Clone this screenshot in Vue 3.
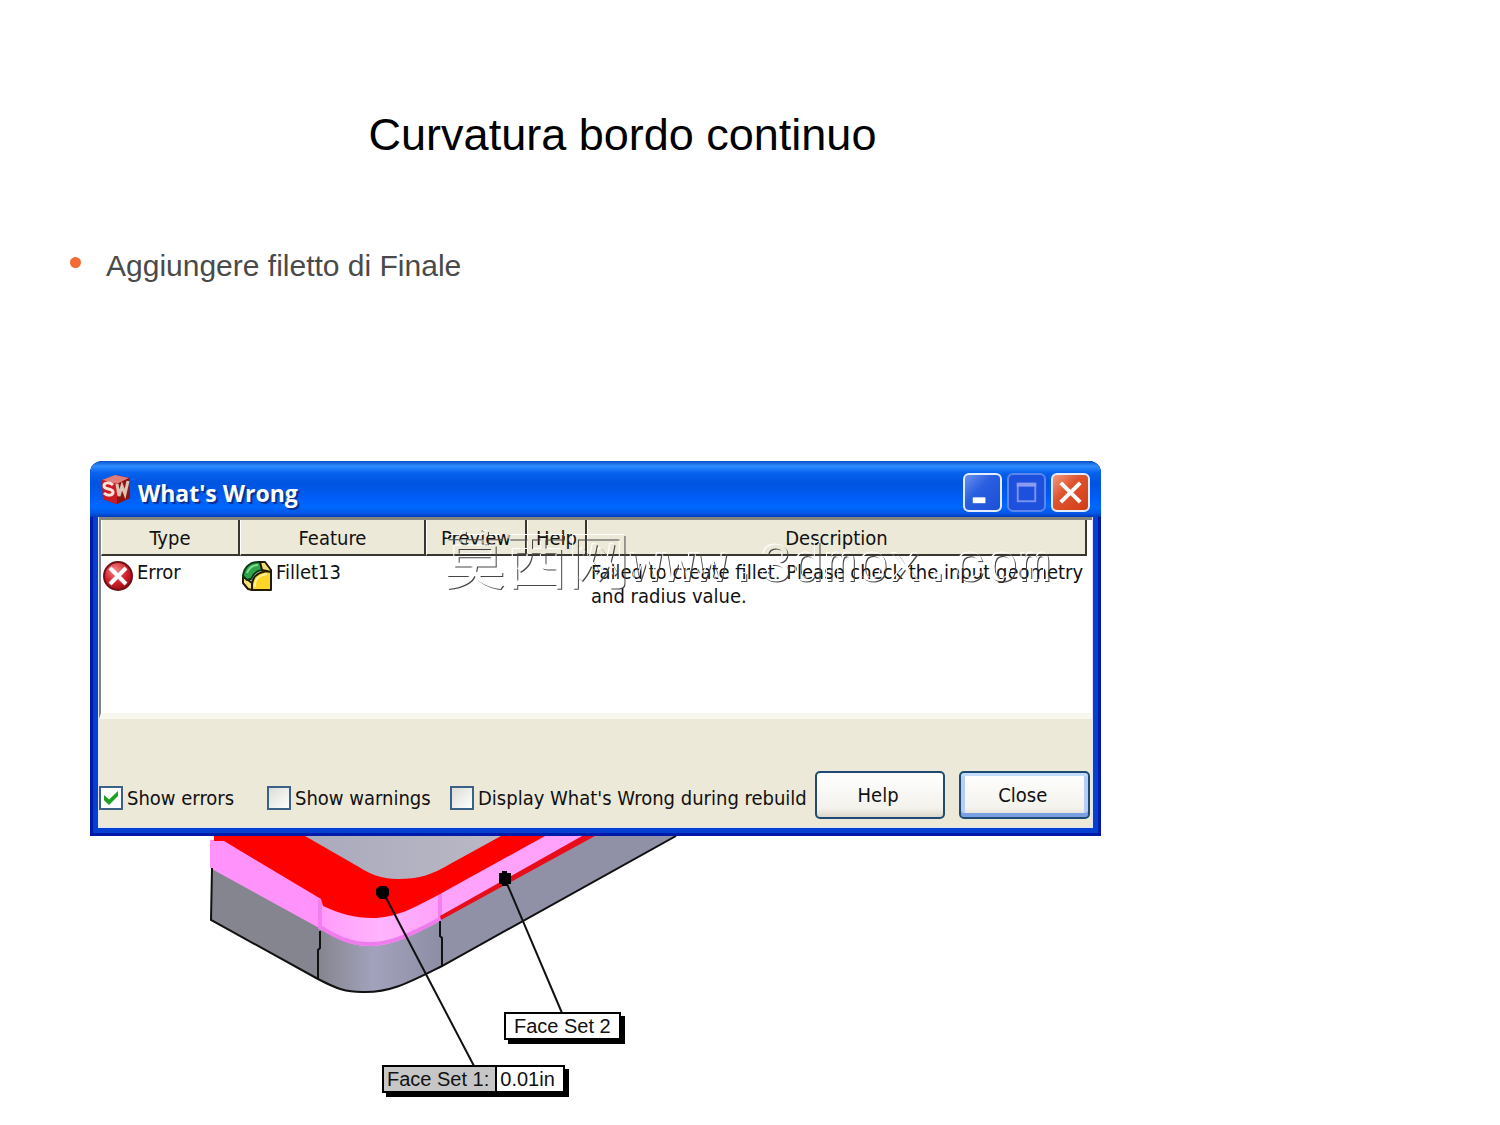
<script setup>
import { ref, reactive } from "vue";

const columns = ['Type', 'Feature', 'Preview', 'Help', 'Description'];

const rows = reactive([
    {
        id: 1,
        type: 'Error',
        feature: 'Fillet13',
        description: 'Failed to create fillet. Please check the input geometry and radius value.'
    }
]);

const options = reactive([
    { id: 'errors', label: 'Show errors', checked: true },
    { id: 'warnings', label: 'Show warnings', checked: false },
    { id: 'rebuild', label: "Display What's Wrong during rebuild", checked: false }
]);

const radius = ref('0.01in');
</script>

<template>
    <main class="slide">
        <h1>Curvatura bordo continuo</h1>
        <ul class="points">
            <li>Aggiungere filetto di Finale</li>
        </ul>

        <section class="dialog" aria-labelledby="dialogTitle">
            <header class="titleBar">
                <svg class="logo" viewBox="0 0 32 32" aria-hidden="true">
                    <path d="M2 6L15 1l14 3 1 20-14 6L3 25z" fill="#b80f16" />
                    <path d="M2 6L15 1l14 3-12 6z" fill="#e07d7a" />
                    <path d="M2 6l15 4v20L3 25z" fill="#c91d25" />
                    <path d="M17 10l12-6 1 20-13 6z" fill="#8b1511" />
                    <path d="M13 11c-3-3-9-3-9 1 0 4 9 2 9 6 0 4-6 4-9 1" fill="none" stroke="#f6e3da" stroke-width="3" />
                    <path d="M17 10l2 12 3-10 3 8 3-13" fill="none" stroke="#dcc3b6" stroke-width="3" />
                </svg>
                <h2 id="dialogTitle">What's Wrong</h2>
                <button class="winBtn" aria-label="Minimize">
                    <svg viewBox="0 0 36 36"><rect x="8" y="23" width="13" height="6" fill="#fff" /></svg>
                </button>
                <button class="winBtn maximize" aria-label="Maximize" disabled>
                    <svg viewBox="0 0 36 36">
                        <rect x="9" y="9" width="18" height="18" fill="none" stroke="#7b93f0" stroke-width="2" />
                        <path d="M8 10h20" stroke="#8b9bf0" stroke-width="4" />
                    </svg>
                </button>
                <button class="winBtn close" aria-label="Close window">
                    <svg viewBox="0 0 36 36"><path d="M8 8l20 20M28 8L8 28" stroke="#fff" stroke-width="4" /></svg>
                </button>
            </header>

            <div class="client">
                <div class="list">
                    <table>
                        <colgroup>
                            <col v-for="name in columns" :key="name" :class="'col' + name">
                        </colgroup>
                        <thead>
                            <tr>
                                <th v-for="name in columns" :key="name" scope="col">{{ name }}</th>
                            </tr>
                        </thead>
                        <tbody>
                            <tr v-for="row in rows" :key="row.id">
                                <td>
                                    <div class="item">
                                        <svg viewBox="0 0 32 32" aria-hidden="true">
                                            <defs>
                                                <radialGradient id="errorFill" cx="0.4" cy="0.3" r="0.7">
                                                    <stop offset="0" stop-color="#f4898c" />
                                                    <stop offset="0.6" stop-color="#d5232e" />
                                                    <stop offset="1" stop-color="#a00d16" />
                                                </radialGradient>
                                            </defs>
                                            <circle cx="16" cy="16" r="14" fill="url(#errorFill)" stroke="#6e1015" stroke-width="2" />
                                            <path d="M8 8l16 16M24 8L8 24" stroke="#fff" stroke-width="4" />
                                        </svg>
                                        <span>{{ row.type }}</span>
                                    </div>
                                </td>
                                <td>
                                    <div class="item">
                                        <svg viewBox="0 0 32 32" aria-hidden="true">
                                            <path d="M11 30V24C12 15 19 11 30 11v19z" fill="#ffd52a" stroke="#221b00" stroke-width="2" stroke-linejoin="round" />
                                            <path d="M2 16l9 7v7l-4-1-5-6z" fill="#f5e27a" stroke="#221b00" stroke-width="2" stroke-linejoin="round" />
                                            <path d="M2 16C3 7 9 2 17 2h4v8c-6 1-9 4-11 9l-4 1z" fill="#2da34b" stroke="#0b3814" stroke-width="2" stroke-linejoin="round" />
                                            <path d="M19 2h5l6 8v2l-9-2z" fill="#f3dc74" stroke="#221b00" stroke-width="2" stroke-linejoin="round" />
                                            <path d="M6 13c2-5 6-8 11-8" fill="none" stroke="#84dc91" stroke-width="2" />
                                            <path d="M14 27v-4c1-5 5-8 12-9" fill="none" stroke="#fff299" stroke-width="2" />
                                        </svg>
                                        <span>{{ row.feature }}</span>
                                    </div>
                                </td>
                                <td></td>
                                <td></td>
                                <td>{{ row.description }}</td>
                            </tr>
                        </tbody>
                    </table>
                </div>

                <footer class="actions">
                    <div class="options">
                        <label v-for="option in options" :key="option.id">
                            <input type="checkbox" v-model="option.checked">
                            <span>{{ option.label }}</span>
                        </label>
                    </div>
                    <button class="action">Help</button>
                    <button class="action default">Close</button>
                </footer>
            </div>

            <div class="watermark"><span class="han">莫西网</span><span class="site">www.3dmox.com</span></div>
        </section>

        <div class="model">
            <svg class="part" viewBox="200 836 500 270" width="500" height="270" aria-hidden="true">
                <defs>
                    <linearGradient id="cornerFill">
                        <stop offset="0" stop-color="#85858f" />
                        <stop offset="0.45" stop-color="#a2a2bc" />
                        <stop offset="1" stop-color="#8d8da4" />
                    </linearGradient>
                    <linearGradient id="pocketFill">
                        <stop offset="0" stop-color="#aaaabd" />
                        <stop offset="1" stop-color="#bab8c5" />
                    </linearGradient>
                    <linearGradient id="blendFill">
                        <stop offset="0" stop-color="#ff9cfb" />
                        <stop offset="0.5" stop-color="#ffb4fc" />
                        <stop offset="1" stop-color="#ffa2fb" />
                    </linearGradient>
                    <filter id="emboss" x="-2%" y="-5%" width="104%" height="110%">
                        <feOffset in="SourceAlpha" dx="1" dy="1" result="low" />
                        <feComposite in="low" in2="SourceAlpha" operator="out" result="lowEdge" />
                        <feFlood flood-color="#444" />
                        <feComposite in2="lowEdge" operator="in" result="dark" />
                        <feOffset in="SourceAlpha" dx="-1" dy="-1" result="high" />
                        <feComposite in="high" in2="SourceAlpha" operator="out" result="highEdge" />
                        <feFlood flood-color="#fff" />
                        <feComposite in2="highEdge" operator="in" result="light" />
                        <feMerge>
                            <feMergeNode in="light" />
                            <feMergeNode in="dark" />
                        </feMerge>
                    </filter>
                </defs>
                <!-- side walls -->
                <path d="M211 860V920L318 979L320 920z" fill="#85858f" />
                <path d="M320 910L318 979C337 989 346 992 362 992C390 993 410 982 442 966V900z" fill="url(#cornerFill)" />
                <path d="M440 900L560 836H676L442 966z" fill="#9090a7" />
                <!-- blend -->
                <path d="M210 840L230 838L321 898V929L210 868z" fill="#ff92fb" />
                <path d="M320 890L440 885V921C405 940 388 946 370 946C350 946 338 939 320 929z" fill="url(#blendFill)" />
                <path d="M440 890L540 836H588L440 916z" fill="#ffa2fc" />
                <path d="M320 927C338 938 350 944 370 944C388 944 405 938 440 919" fill="none" stroke="#ef7cec" stroke-width="4" />
                <path d="M320 899V929M440 892V920" stroke="#f47df2" stroke-width="4" />
                <!-- selected faces -->
                <path d="M214 836V841H224L321 899L323 906C340 914 355 918 372 918C395 918 412 909 440 894L545 836z" fill="#fe0000" />
                <path d="M440 916L582 836H595L441 920z" fill="#e80d1b" />
                <path d="M305 836L352 863C370 874 380 879 398 879C418 879 432 875 450 864L501 836z" fill="url(#pocketFill)" />
                <g fill="none" stroke="#111" stroke-width="2">
                    <path d="M212 868L211 920L318 979C337 989 346 992 362 992C390 993 410 982 442 966L676 836" />
                    <path d="M320 931V948L318 950V979M440 921V936L442 938V967" />
                    <path d="M383 892L474 1066M505 879L562 1013" />
                </g>
                <path d="M380 886h6l3 3v6l-3 4h-6l-4-4v-6zM499 873h3v-2h5v2h4v11h-3v2h-6v-2h-3z" fill="#000" />
            </svg>
            <label class="callout first">
                <span>Face Set 1:</span>
                <input v-model="radius" type="text">
            </label>
            <div class="callout second">Face Set 2</div>
        </div>
    </main>
</template>

<style>
body {
    background-color: #fff;
}
</style>

<style scoped>
* {
    box-sizing: border-box;
}

.slide {
    padding: 108px 0 20px;
    font-family: "Liberation Sans", Arial, sans-serif;
}

h1 {
    margin: 0 17% 0 0;
    text-align: center;
    font-size: 45px;
    line-height: 54px;
    font-weight: 400;
    color: #000;
}

.points {
    list-style: none;
    margin: 86px 5% 0;
    padding: 0;
    font-size: 30px;
    line-height: 36px;
    color: #4a4a4a;
}

.points li {
    display: flex;
    gap: 25px;
}

.points li::before {
    content: "";
    width: 11px;
    height: 11px;
    margin: 9px 0 0 -5px;
    border-radius: 50%;
    background-color: #f26a35;
}

.dialog {
    position: relative;
    width: 67.4%;
    min-width: 1008px;
    margin: 177px 0 0 6%;
    padding: 0 8px 8px;
    border-radius: 12px 12px 0 0;
    background-color: #0540d0;
    box-shadow: inset 3px -3px #0019a8, inset -3px 0 #0019a8;
    font-family: "DejaVu Sans Condensed", "Noto Sans", sans-serif;
    font-size: 20px;
    line-height: 24px;
    color: #111;
}

.titleBar {
    display: flex;
    align-items: center;
    gap: 5px;
    height: 56px;
    margin: 0 -8px;
    padding: 6px 11px 0 10px;
    border-radius: 12px 12px 0 0;
    background: linear-gradient(#0a50c8 0, #2f8dff 5px, #0662ee 12px, #0054df 22px, #005cf5 36px, #0068ff 46px, #0058e8 52px, #003cb8 56px);
}

.logo {
    width: 32px;
    height: 32px;
    margin-bottom: 4px;
}

h2 {
    flex: 1;
    margin: 0;
    padding: 2px 0 0 1px;
    font-family: "Open Sans", "Noto Sans", sans-serif;
    font-size: 23px;
    line-height: 32px;
    font-weight: 700;
    color: #fff;
    text-shadow: 2px 2px 1px #0a2f8c;
}

.winBtn {
    width: 39px;
    height: 39px;
    padding: 0;
    border: 2px solid #e4edff;
    border-radius: 6px;
    background: linear-gradient(135deg, #6c92f0, #2a5fe0 40%, #1c50d8);
}

.winBtn svg {
    display: block;
    width: 100%;
}

.winBtn.maximize {
    border-color: #5c86ee;
    background: #1d50dc;
}

.winBtn.close {
    background: linear-gradient(135deg, #f09a80, #e0532f 40%, #cf3d16);
}

.client {
    background-color: #ece9d8;
    border: 1px solid #dfe4f4;
    border-top: 0;
}

.list {
    min-height: 202px;
    padding-right: 5px;
    border-top: 3px solid #85857f;
    border-left: 2px solid #85857f;
    border-bottom: 6px solid #f8f7ee;
    background-color: #fff;
}

table {
    width: 100%;
    table-layout: fixed;
    border-collapse: separate;
    border-spacing: 0;
}

.colType {
    width: 139px;
}

.colFeature {
    width: 186px;
}

.colPreview {
    width: 101px;
}

.colHelp {
    width: 60px;
}

th {
    height: 36px;
    padding: 2px 0 0;
    font-weight: 400;
    background-color: #ece9d8;
    border-right: 2px solid #38362e;
    border-bottom: 2px solid #38362e;
    border-left: 1px solid #fff;
}

td {
    padding: 4px 0 0 4px;
    vertical-align: top;
}

.item {
    display: flex;
    gap: 3px;
    margin-left: -3px;
}

.item svg {
    flex: none;
    width: 32px;
    height: 32px;
}

.actions {
    display: flex;
    align-items: flex-end;
    gap: 14px;
    height: 108px;
    padding: 0 2px 8px 0;
}

.options {
    flex: 1;
    display: grid;
    grid-template-columns: 168px 183px 1fr;
    margin: 0 -6px 9px 0;
    white-space: nowrap;
}

.options label {
    display: flex;
    align-items: center;
    gap: 4px;
}

.options input {
    appearance: none;
    width: 24px;
    height: 24px;
    margin: 0;
    border: 2px solid #3c6186;
    background: linear-gradient(135deg, #dcdcd7, #fff);
}

.options input:checked {
    background: #fff;
}

.options input:checked::before {
    content: "";
    display: block;
    width: 14px;
    height: 14px;
    margin: 3px;
    background-color: #21a121;
    clip-path: polygon(0 28%, 36% 60%, 100% 0, 100% 35%, 36% 100%, 0 66%);
}

.action {
    width: 131px;
    height: 48px;
    padding: 0 4px 0 0;
    border: 2px solid #1f4a74;
    border-radius: 5px;
    background: linear-gradient(#fff, #f3f2ec 80%, #dcd7cb);
    font: inherit;
    color: inherit;
}

.action.default {
    box-shadow: inset 0 3px #c4dcfb, inset 0 -4px #7a9fe2, inset 4px 0 #b6cdf5, inset -4px 0 #b6cdf5;
}

/* lies over the header and the first row */
.watermark {
    position: absolute;
    top: 66px;
    left: 35%;
    display: flex;
    align-items: flex-start;
    white-space: nowrap;
    pointer-events: none;
    filter: url(#emboss);
}

.han {
    font-family: "Noto Sans CJK SC", sans-serif;
    font-size: 62px;
    line-height: 60px;
}

.site {
    font-family: "Liberation Mono", monospace;
    font-size: 54px;
    line-height: 80px;
}

.model {
    position: relative;
    margin-left: 200px;
}

.part {
    display: block;
}

.callout {
    position: absolute;
    display: flex;
    height: 28px;
    border: 2px solid #000;
    background-color: #fff;
    box-shadow: 4px 4px #000;
    font-size: 20px;
    line-height: 24px;
    color: #111;
    white-space: nowrap;
}

.callout.first {
    top: 229px;
    left: 182px;
}

.callout.first span {
    padding: 0 6px 0 3px;
    border-right: 2px solid #000;
    background-color: #c6c6c6;
}

.callout input {
    width: 66px;
    padding: 0 0 0 3px;
    border: 0;
    background: none;
    font: inherit;
    color: inherit;
}

.callout.second {
    top: 176px;
    left: 304px;
    padding: 0 8px;
}
</style>
